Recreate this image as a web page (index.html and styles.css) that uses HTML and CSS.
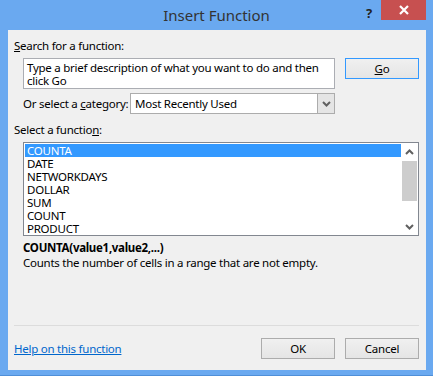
FILE: index.html
```html
<!DOCTYPE html>
<html lang="en">
<head>
    <meta charset="UTF-8">
    <title>Insert Function</title>
    <link rel="stylesheet" href="styles.css">
</head>
<body>
    <div class="window">
        <div class="titlebar">
            <div class="title">Insert Function</div>
            <div class="help-btn">?</div>
            <div class="close-btn">
                <svg width="10" height="10" viewBox="0 0 10 10">
                    <path d="M1 1 L9 9 M9 1 L1 9" stroke="#fff" stroke-width="2.2"/>
                </svg>
            </div>
        </div>

        <div class="client">
            <div class="label"><u>S</u>earch for a function:</div>
            <div class="search-row">
                <div class="search-box">Type a brief description of what you want to do and then click Go</div>
                <button class="btn go"><u>G</u>o</button>
            </div>

            <div class="category-row">
                <span class="category-label">Or select a <u>c</u>ategory:</span>
                <div class="combo">
                    <span class="combo-text">Most Recently Used</span>
                    <span class="combo-arrow">
                        <svg width="9" height="6" viewBox="0 0 9 6">
                            <path d="M1 1 L4.5 4.5 L8 1" stroke="#606060" stroke-width="2" fill="none"/>
                        </svg>
                    </span>
                </div>
            </div>

            <div class="label select-label">Select a functio<u>n</u>:</div>
            <div class="listbox">
                <ul class="items">
                    <li class="selected">COUNTA</li>
                    <li>DATE</li>
                    <li>NETWORKDAYS</li>
                    <li>DOLLAR</li>
                    <li>SUM</li>
                    <li>COUNT</li>
                    <li>PRODUCT</li>
                </ul>
                <div class="scrollbar">
                    <div class="scroll-btn">
                        <svg width="9" height="6" viewBox="0 0 9 6">
                            <path d="M1 5 L4.5 1.5 L8 5" stroke="#606060" stroke-width="2" fill="none"/>
                        </svg>
                    </div>
                    <div class="track"><div class="thumb"></div></div>
                    <div class="scroll-btn">
                        <svg width="9" height="6" viewBox="0 0 9 6">
                            <path d="M1 1 L4.5 4.5 L8 1" stroke="#606060" stroke-width="2" fill="none"/>
                        </svg>
                    </div>
                </div>
            </div>

            <div class="syntax">COUNTA(value1,value2,...)</div>
            <div class="description">Counts the number of cells in a range that are not empty.</div>

            <div class="footer">
                <a class="help-link" href="#">Help on this function</a>
                <div class="buttons">
                    <button class="btn">OK</button>
                    <button class="btn">Cancel</button>
                </div>
            </div>
        </div>
    </div>
</body>
</html>
```

FILE: styles.css
```css
* {
    margin: 0;
    padding: 0;
    box-sizing: border-box;
}

body {
    font-family: 'Noto Sans', 'Open Sans', sans-serif;
    font-size: 11.5px;
    letter-spacing: -0.25px;
    color: #000;
    background: #6aa9f0;
}

.window {
    width: 433px;
    height: 376px;
    background: #6aa9f0;
    border-bottom: 1px solid #4f8fd8;
    display: flex;
    flex-direction: column;
}

.titlebar {
    height: 30px;
    display: flex;
    align-items: flex-start;
    position: relative;
}

.title {
    position: absolute;
    left: 0;
    right: 0;
    top: 5px;
    text-align: center;
    font-size: 15px;
    letter-spacing: 0;
    color: #333;
}

.help-btn {
    margin-left: auto;
    margin-top: 4px;
    width: 20px;
    text-align: center;
    font-weight: bold;
    font-size: 13px;
    color: #222;
}

.close-btn {
    width: 45px;
    height: 20px;
    margin-left: 2px;
    margin-right: 7px;
    background: #c75050;
    display: flex;
    align-items: center;
    justify-content: center;
}

.client {
    margin: 0 7px 5px 8px;
    flex: 1;
    background: #f0f0f0;
    padding: 0 7px 0 6px;
    display: flex;
    flex-direction: column;
}

.label {
    line-height: 15px;
    margin-top: 8px;
    white-space: nowrap;
}

.search-row {
    display: flex;
    align-items: flex-start;
    margin-top: 5px;
}

.search-box {
    margin-left: 9px;
    width: 312px;
    height: 31px;
    background: #fff;
    border: 1px solid #abadb3;
    padding: 2px 3px 0 3px;
    line-height: 13px;
}

.btn {
    font-family: inherit;
    font-size: 11.5px;
    letter-spacing: -0.25px;
    color: #000;
    width: 74px;
    height: 21px;
    border: 1px solid #acacac;
    background: linear-gradient(#f0f0f0, #e5e5e5);
}

.btn.go {
    margin-left: auto;
    border-color: #3399ff;
}

.category-row {
    display: flex;
    align-items: center;
    margin-top: 4px;
    margin-left: 9px;
}

.category-label {
    width: 107px;
    white-space: nowrap;
}

.combo {
    width: 205px;
    height: 21px;
    background: #fff;
    border: 1px solid #acacac;
    display: flex;
    align-items: center;
    padding-left: 4px;
}

.combo-text {
    flex: 1;
}

.combo-arrow {
    width: 17px;
    height: 19px;
    background: #e5e5e5;
    border-left: 1px solid #acacac;
    display: flex;
    align-items: center;
    justify-content: center;
}

.select-label {
    margin-top: 8px;
}

.listbox {
    margin-top: 5px;
    margin-left: 9px;
    width: 396px;
    height: 94px;
    border: 1px solid #828790;
    background: #fff;
    display: flex;
}

.items {
    list-style: none;
    flex: 1;
    padding: 1px 0 0 1px;
}

.items li {
    height: 13px;
    line-height: 13px;
    padding-left: 2px;
}

.items li.selected {
    background: #3399ff;
    color: #fff;
}

.scrollbar {
    width: 17px;
    display: flex;
    flex-direction: column;
    background: #fff;
}

.scroll-btn {
    height: 17px;
    display: flex;
    align-items: center;
    justify-content: center;
}

.track {
    flex: 1;
    padding: 1px 1px 0 1px;
}

.thumb {
    height: 40px;
    background: #cdcdcd;
}

.syntax {
    margin-top: 4px;
    margin-left: 9px;
    font-weight: bold;
    line-height: 15px;
    letter-spacing: -0.3px;
}

.description {
    margin-left: 9px;
    line-height: 15px;
}

.footer {
    margin-top: auto;
    border-top: 1px solid #dcdcdc;
    padding: 12px 0 11px 0;
    display: flex;
    align-items: center;
}

.help-link {
    color: #0066cc;
}

.buttons {
    margin-left: auto;
    display: flex;
    gap: 10px;
}
```
